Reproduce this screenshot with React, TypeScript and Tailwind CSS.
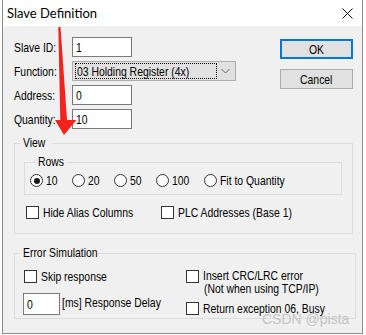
import React from "react";

function T({ children, c = "origin-left" }: { children: React.ReactNode; c?: string }) {
  return <span className={`inline-block whitespace-nowrap scale-x-[0.8] ${c}`}>{children}</span>;
}

function Radio({ checked, label, w }: { checked?: boolean; label: string; w: string }) {
  return (
    <div className={`flex items-center gap-[3px] ${w}`}>
      <div className="w-[13px] h-[13px] rounded-full border border-[#333333] bg-white flex items-center justify-center shrink-0">
        {checked && <div className="w-[6px] h-[6px] rounded-full bg-[#1a1a1a]" />}
      </div>
      <T>{label}</T>
    </div>
  );
}

function Check() {
  return <div className="w-[13px] h-[13px] border border-[#333333] bg-white shrink-0" />;
}

export default function App() {
  return (
    <div className="w-[366px] h-[335px] bg-white relative overflow-hidden text-[13px] leading-[15px] text-black [font-family:'Liberation_Sans',Arial,sans-serif]">
      <div className="ml-[2px] w-[361px] h-[334px] border-x border-b border-[#8c8c8c] bg-[#f0f0f0] flex flex-col">
        {/* title bar */}
        <div className="h-[26px] bg-white flex items-center justify-between pl-[4px] pr-[9px] shrink-0">
          <span className="[font-family:Lato,sans-serif] text-[13px] leading-[16px] text-black">Slave Definition</span>
          <svg width="11" height="11" viewBox="0 0 11 11" className="mt-[1px]">
            <path d="M0.5 0.5 L10.5 10.5 M10.5 0.5 L0.5 10.5" stroke="#111" strokeWidth="1" fill="none" />
          </svg>
        </div>

        {/* body */}
        <div className="flex flex-col pt-[11px] pl-[11px] pr-[8px]">
          <div className="flex justify-between">
            <div className="flex flex-col gap-[4px]">
              <div className="flex items-center h-[20px]">
                <span className="w-[58px]"><T>Slave ID:</T></span>
                <div className="w-[60px] h-[20px] border border-[#7a7a7a] bg-white pl-[3px] flex items-center"><T>1</T></div>
              </div>
              <div className="flex items-center h-[20px]">
                <span className="w-[58px]"><T>Function:</T></span>
                <div className="w-[164px] h-[20px] border border-[#adadad] bg-[#e1e1e1] flex items-center pl-[2px] pr-[5px]">
                  <div className="w-[142px] h-[16px] border border-dotted border-black flex items-center pl-[1px] overflow-visible">
                    <T>03 Holding Register (4x)</T>
                  </div>
                  <div className="flex-1 flex justify-end">
                    <svg width="9" height="6" viewBox="0 0 9 6">
                      <path d="M0.5 1 L4.5 5 L8.5 1" stroke="#606060" strokeWidth="1" fill="none" />
                    </svg>
                  </div>
                </div>
              </div>
              <div className="flex items-center h-[20px]">
                <span className="w-[58px]"><T>Address:</T></span>
                <div className="w-[60px] h-[20px] border border-[#7a7a7a] bg-white pl-[3px] flex items-center"><T>0</T></div>
              </div>
              <div className="flex items-center h-[20px]">
                <span className="w-[58px]"><T>Quantity:</T></span>
                <div className="w-[60px] h-[20px] border border-[#7a7a7a] bg-white pl-[3px] flex items-center"><T>10</T></div>
              </div>
            </div>
            <div className="flex flex-col gap-[10px] mt-[2px] mr-[1px]">
              <div className="w-[73px] h-[20px] border-2 border-[#0078d7] bg-[#e1e1e1] flex items-center justify-center"><T c="origin-center">OK</T></div>
              <div className="w-[73px] h-[20px] border border-[#adadad] bg-[#e1e1e1] flex items-center justify-center"><T c="origin-center">Cancel</T></div>
            </div>
          </div>

          {/* View group */}
          <fieldset className="mt-[7px] border border-[#dcdcdc] px-0 pb-[13px] w-[339px]">
            <legend className="ml-[5px] px-[3px] w-[32px] leading-[14px]"><T>View</T></legend>
            <fieldset className="mt-[5px] ml-[9px] w-[318px] border border-[#dcdcdc] pl-[5px] pt-[4px] pb-[6px]">
              <legend className="ml-[6px] px-[2px] w-[31px] leading-[14px]"><T>Rows</T></legend>
              <div className="flex items-center h-[15px]">
                <Radio checked label="10" w="w-[42px]" />
                <Radio label="20" w="w-[42px]" />
                <Radio label="50" w="w-[42px]" />
                <Radio label="100" w="w-[48px]" />
                <Radio label="Fit to Quantity" w="" />
              </div>
            </fieldset>
            <div className="flex items-center h-[15px] mt-[10px] pl-[11px]">
              <div className="flex items-center gap-[4px] w-[135px]">
                <Check />
                <T>Hide Alias Columns</T>
              </div>
              <div className="flex items-center gap-[4px]">
                <Check />
                <T>PLC Addresses (Base 1)</T>
              </div>
            </div>
          </fieldset>

          {/* Error Simulation group */}
          <fieldset className="mt-[12px] border border-[#dcdcdc] px-0 pb-[3px] w-[339px]">
            <legend className="ml-[5px] px-[3px] w-[77px] leading-[14px]"><T>Error Simulation</T></legend>
            <div className="flex">
              <div className="w-[171px] flex flex-col pl-[8px]">
                <div className="flex items-center gap-[4px] h-[15px] mt-[9px] ml-[1px]">
                  <Check />
                  <T>Skip response</T>
                </div>
                <div className="flex items-center gap-[2px] mt-[9px]">
                  <div className="w-[47px] h-[22px] border border-[#7a7a7a] bg-white pl-[3px] flex items-center"><T>0</T></div>
                  <span className="mb-[4px]"><T>[ms] Response Delay</T></span>
                </div>
              </div>
              <div className="flex flex-col">
                <div className="flex items-start gap-[4px] mt-[9px]">
                  <div className="mt-[1px]"><Check /></div>
                  <div className="flex flex-col leading-[13px]">
                    <T>Insert CRC/LRC error</T>
                    <T c="origin-left ml-[1px]"> (Not when using TCP/IP)</T>
                  </div>
                </div>
                <div className="flex items-center gap-[4px] mt-[7px] h-[13px]">
                  <Check />
                  <T>Return exception 06, Busy</T>
                </div>
              </div>
            </div>
          </fieldset>
        </div>
      </div>

      {/* red annotation arrow */}
      <svg className="absolute left-0 top-0" width="366" height="335" viewBox="0 0 366 335">
        <polygon points="58.3,27 60.5,27 67,120 76.5,120 64,135 55,120 60.3,120" fill="#f2231c" />
      </svg>

      {/* watermark */}
      <span className="absolute left-[262px] top-[311px] [font-family:'Liberation_Sans',Arial,sans-serif] text-[14px] leading-[16px] text-[#c4c4c4]">
        CSDN @pista
      </span>
    </div>
  );
}
